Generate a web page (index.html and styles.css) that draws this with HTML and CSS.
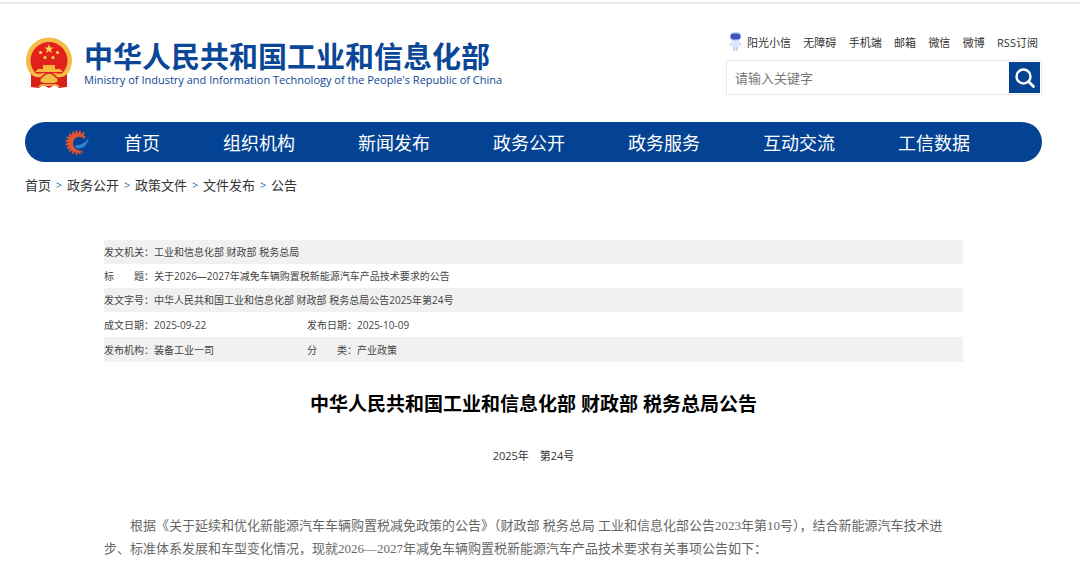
FILE: index.html
```html
<!DOCTYPE html>
<html lang="zh-CN">
<head>
<meta charset="utf-8">
<meta name="viewport" content="width=device-width, initial-scale=1">
<title>中华人民共和国工业和信息化部 财政部 税务总局公告</title>
<link rel="stylesheet" href="styles.css">
</head>
<body>
<div class="page">
  <header class="header">
    <a class="brand" href="#">
      <svg class="emblem" viewBox="0 0 48 52" aria-hidden="true">
        <path d="M9 35 6 50 14 51 18 48 30 48 34 51 41 50 39 35Z" fill="#d9201d"/>
        <circle cx="24" cy="23.500" r="23" fill="#f4bd45"/>
        <circle cx="24" cy="23.500" r="18.500" fill="#e2211c"/>
        <path d="m24 7 1.200 3.400h3.600l-2.900 2.200 1.100 3.500-3-2.100-3 2.100 1.100-3.500-2.900-2.200h3.600z" fill="#f9d54d"/>
        <g fill="#f9d54d"><circle cx="15.500" cy="15.500" r="1.600"/><circle cx="32.500" cy="15.500" r="1.600"/><circle cx="20" cy="20.500" r="1.600"/><circle cx="28" cy="20.500" r="1.600"/></g>
        <path d="M18 28h12v4h5l3 3H10l3-3h5z" fill="#f5b83d"/>
        <path d="M5 35q9 3 13 1h12q4 2 13-1l-5 6q-6-1-8 4H18q-2-5-8-4z" fill="#f4bd45"/>
        <path d="M6 37q4 4 10 3l-1 10-9 0zM42 37q-4 4-10 3l1 10 9 0z" fill="#d9201d"/>
        <path d="M16 41q4-5 8-5t8 5" fill="none" stroke="#d9201d" stroke-width="1.500"/>
        <circle cx="24" cy="42" r="4" fill="#f4bd45"/>
        <path d="M14 46h20v4l-4-2-6 3-6-3-4 2z" fill="#d9201d"/>
        <path d="M14 50q2-3 5-2h10q3-1 5 2" fill="none" stroke="#f4bd45" stroke-width="1.500"/>
      </svg>
      <span class="brand-text">
        <span class="brand-name">中华人民共和国工业和信息化部</span>
        <span class="brand-en">Ministry of Industry and Information Technology of the People's Republic of China</span>
      </span>
    </a>
    <div class="tools">
      <nav class="links" aria-label="快捷链接">
        <a class="assistant" href="#"><svg class="robot" viewBox="0 0 14 22" aria-hidden="true">
          <rect x="2" y="1" width="11" height="9" rx="4" fill="#c9d5f4"/>
          <rect x="2.500" y="2.500" width="10" height="6" rx="3" fill="#3c55bd"/>
          <path d="M5 10h5l1 6-2 4H6l-2-4z" fill="#dce6fa"/>
          <path d="M4 11 2 15M11 11l2 4M6 16v4M9 16v4" stroke="#b9caf0" stroke-width="1.200" fill="none"/>
        </svg>阳光小信</a>
        <a href="#">无障碍</a>
        <a href="#">手机端</a>
        <a href="#">邮箱</a>
        <a href="#">微信</a>
        <a href="#">微博</a>
        <a href="#">RSS订阅</a>
      </nav>
      <form class="search">
        <input class="search-input" type="text" placeholder="请输入关键字" aria-label="请输入关键字">
        <button class="search-button" type="button" aria-label="搜索">
          <svg class="search-icon" viewBox="0 0 20 20" aria-hidden="true"><circle cx="8.500" cy="8.500" r="7" fill="none" stroke="#fff" stroke-width="2.400"/><path d="m13.500 13.500 5 5" stroke="#fff" stroke-width="2.800" stroke-linecap="round"/></svg>
        </button>
      </form>
    </div>
  </header>

  <nav class="mainnav" aria-label="主导航">
    <svg class="nav-logo" viewBox="0 0 26 26" aria-hidden="true">
      <path d="M20 5A10.800 10.800 0 1 0 19 23" fill="none" stroke="#e0532f" stroke-width="2.500" stroke-dasharray="2 1.500"/>
      <path d="M21 7A10 10 0 1 0 19 22Q13 22 10.500 18.500Q7.500 14 10.500 10Q14.500 5.500 21 10Z" fill="#e0532f"/>
      <path d="M11 15.500Q19 15 19 11.500Q17 8.500 14 11Q12.500 13 12.500 15" fill="none" stroke="#044394" stroke-width="1.500"/>
      <path d="M11 16.500Q21 16 25 8Q23 20 14 19.500Q11.500 19 11 16.500Z" fill="#2f82cf"/>
    </svg>
    <a href="#">首页</a>
    <a href="#">组织机构</a>
    <a href="#">新闻发布</a>
    <a href="#">政务公开</a>
    <a href="#">政务服务</a>
    <a href="#">互动交流</a>
    <a href="#">工信数据</a>
  </nav>

  <nav class="crumbs" aria-label="当前位置">
    <a href="#">首页</a><span class="sep">&gt;</span><a href="#">政务公开</a><span class="sep">&gt;</span><a href="#">政策文件</a><span class="sep">&gt;</span><a href="#">文件发布</a><span class="sep">&gt;</span><a href="#">公告</a>
  </nav>

  <main class="article">
    <table class="meta">
      <tbody>
        <tr><th scope="row">发文机关：</th><td colspan="3">工业和信息化部 财政部 税务总局</td></tr>
        <tr><th scope="row">标　　题：</th><td colspan="3">关于2026—2027年减免车辆购置税新能源汽车产品技术要求的公告</td></tr>
        <tr><th scope="row">发文字号：</th><td colspan="3">中华人民共和国工业和信息化部 财政部 税务总局公告2025年第24号</td></tr>
        <tr class="split"><th scope="row">成文日期：</th><td class="first">2025-09-22</td><th scope="row">发布日期：</th><td>2025-10-09</td></tr>
        <tr class="split"><th scope="row">发布机构：</th><td class="first">装备工业一司</td><th scope="row">分　　类：</th><td>产业政策</td></tr>
      </tbody>
    </table>
    <h1 class="title">中华人民共和国工业和信息化部 财政部 税务总局公告</h1>
    <p class="number">2025年　第24号</p>
    <p class="body-text">根据《关于延续和优化新能源汽车车辆购置税减免政策的公告》（财政部 税务总局 工业和信息化部公告2023年第10号），结合新能源汽车技术进步、标准体系发展和车型变化情况，现就2026—2027年减免车辆购置税新能源汽车产品技术要求有关事项公告如下：</p>
  </main>
</div>
</body>
</html>
```

FILE: styles.css
```css
* { box-sizing: border-box; }

body {
  margin: 0;
  background: #fff;
  color: #333;
  font-family: "Open Sans", "Noto Sans CJK SC", sans-serif;
}

a { color: inherit; text-decoration: none; }

.page {
  margin-top: 2px;
  padding: 0 38px 0 25px;
  border-top: 2px solid #e8e8e8;
}

.header {
  display: flex;
  justify-content: space-between;
  padding-top: 26px;
}

.brand {
  display: flex;
  gap: 11px;
  padding-top: 7px;
  color: #0b4797;
}

.emblem { width: 48px; height: 52px; }

.brand-text { display: flex; flex-direction: column; padding-top: 4px; }

.brand-name { font-size: 29px; font-weight: 700; line-height: 32px; }

.brand-en {
  font-size: 11px;
  font-weight: 400;
  line-height: 14px;
}

.tools { display: flex; flex-direction: column; gap: 6px; width: 316px; }

.links {
  display: flex;
  justify-content: space-between;
  align-items: center;
  height: 24px;
  padding: 0 4px 0 2px;
  font-size: 11px;
  white-space: nowrap;
}

.assistant { display: flex; align-items: center; gap: 5px; }

.robot { width: 14px; height: 22px; }

.search {
  display: flex;
  height: 35px;
  padding: 1px;
  border: 1px solid #e8e8e8;
}

.search-input {
  flex: 1;
  min-width: 0;
  padding: 0 7px;
  border: 0;
  outline: 0;
  color: #333;
  font-family: inherit;
  font-size: 13px;
}

.search-input::placeholder { color: #777; }

.search-button {
  display: flex;
  align-items: center;
  justify-content: center;
  width: 31px;
  padding: 0;
  border: 0;
  background: #044394;
}

.search-icon { width: 20px; height: 20px; }

.mainnav {
  display: flex;
  align-items: center;
  gap: 63px;
  height: 40px;
  margin-top: 27px;
  padding-left: 39px;
  border-radius: 20px;
  background: #044394;
  color: #fff;
  font-size: 18px;
  white-space: nowrap;
}

.nav-logo { width: 26px; height: 26px; margin-right: -29px; }

.crumbs {
  display: flex;
  padding-top: 13px;
  font-size: 13px;
  line-height: 20px;
}

.sep { width: 16px; color: #2b6cb0; text-align: center; font-size: 11px; }

.article { padding: 45px 79px 0; }

.meta {
  width: 100%;
  border-collapse: collapse;
  color: #444;
  font-size: 10px;
  line-height: 16px;
}

.meta th, .meta td { padding: 4px 0; text-align: left; font-weight: 400; }

.meta .split th, .meta .split td { padding-top: 5px; }

.meta th { width: 49px; white-space: nowrap; }

.meta .first { width: 153px; }

.meta tr:nth-child(odd) { background: #f1f1f1; }

.title {
  margin: 28px 0 0;
  color: #000;
  font-size: 19px;
  font-weight: 700;
  line-height: 28px;
  text-align: center;
}

.number {
  margin: 28px 0 0;
  font-size: 11px;
  line-height: 20px;
  text-align: center;
}

.body-text {
  margin: 48px 0 0;
  color: #666;
  font-family: "Liberation Serif", "Noto Sans CJK SC", serif;
  font-size: 13px;
  line-height: 23px;
  text-indent: 2em;
}
```
